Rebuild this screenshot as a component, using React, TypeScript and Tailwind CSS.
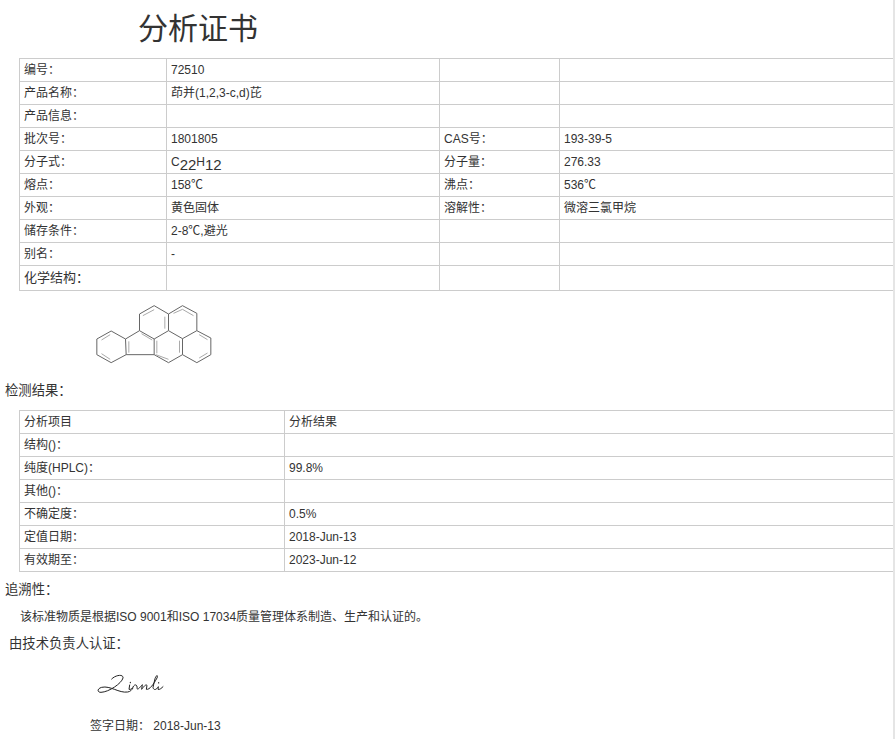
import React from 'react';

const sub = 'bottom-[-4px] text-[15px] leading-none';

const infoRows: [React.ReactNode, React.ReactNode, string, string][] = [
  ['编号：', '72510', '', ''],
  ['产品名称：', '茚并(1,2,3-c,d)芘', '', ''],
  ['产品信息：', '', '', ''],
  ['批次号：', '1801805', 'CAS号：', '193-39-5'],
  ['分子式：', <>C<sub className={sub}>22</sub>H<sub className={sub}>12</sub></>, '分子量：', '276.33'],
  ['熔点：', '158℃', '沸点：', '536℃'],
  ['外观：', '黄色固体', '溶解性：', '微溶三氯甲烷'],
  ['储存条件：', '2-8℃,避光', '', ''],
  ['别名：', '-', '', ''],
];

const resultRows = [
  ['分析项目', '分析结果'],
  ['结构()：', ''],
  ['纯度(HPLC)：', '99.8%'],
  ['其他()：', ''],
  ['不确定度：', '0.5%'],
  ['定值日期：', '2018-Jun-13'],
  ['有效期至：', '2023-Jun-12'],
];

const cell = 'h-[23px] border border-[#ccc] px-[4px] py-0 align-middle';

function Molecule() {
  return (
    <svg viewBox="285 130 350 180" className="ml-[95px] block h-[60px] w-[117px]" fill="none" stroke="#666" strokeWidth="3">
      <path d="M590 210L632 232V282L590 306L547 282V234L590 210V158L547 135L505 160V210L547 234M505 160L462 135L418 160V210L462 235L505 210M462 235V282L505 306L547 282M462 282L378 282L333 306L290 282V235L333 211L376 235L378 282M376 235L418 210" />
      <path stroke="#aaa" d="M597 222L622 237M622 277L597 292M494 168V204M538 240V276M470 240V278M467 282L505 296M386 242V276M330 222L304 238M304 279L330 296M428 165L462 147M520 158L547 146L580 165M424 219L456 238" />
    </svg>
  );
}

function Signature() {
  return (
    <svg viewBox="0 0 270 120" className="ml-[85px] block h-[40px] w-[90px]" fill="none" stroke="#222" strokeWidth="3" strokeLinecap="round">
      <path d="M80 45C92 32 116 30 114 42C110 58 72 84 48 85C36 85 36 74 50 70C76 64 102 88 128 84C136 83 140 78 144 72" />
      <path d="M134 63L132 76C138 78 142 72 146 66C150 60 158 62 156 74C160 78 166 68 172 62L170 76C176 68 182 60 186 64L184 76C194 78 206 60 216 42C220 32 214 32 210 44L204 70C206 80 214 78 220 68L219 76C224 78 230 72 234 68" />
      <path strokeWidth="3.5" d="M136 55L136 56M221 56L221 57" />
    </svg>
  );
}

export default function App() {
  return (
    <div className="h-[739px] overflow-hidden border-r-2 border-[#e5e5e5] bg-white font-['Liberation_Sans','Noto_Sans_CJK_SC',sans-serif] text-[12px] leading-[17px] text-[#333]">
      <h1 className="h-[58px] pl-[138px] pt-[8px] text-[30px] font-normal leading-[42px]">分析证书</h1>

      <table className="ml-[19px] w-[875px] table-fixed border-collapse">
        <colgroup>
          <col className="w-[147px]" />
          <col className="w-[273px]" />
          <col className="w-[120px]" />
          <col />
        </colgroup>
        <tbody>
          {infoRows.map((row, i) => (
            <tr key={i}>
              {row.map((c, j) => (
                <td key={j} className={cell}>{c}</td>
              ))}
            </tr>
          ))}
          <tr>
            <td className={`${cell} h-[25px] pb-[2px] text-[13px]`}>化学结构：</td>
            <td className={cell} />
            <td className={cell} />
            <td className={cell} />
          </tr>
        </tbody>
      </table>

      <div className="pt-[13px]">
        <Molecule />
      </div>

      <div className="mt-[17px] h-[20px] pl-[5px] text-[13.33px] leading-[20px]">检测结果：</div>

      <table className="ml-[19px] mt-[9px] w-[875px] table-fixed border-collapse">
        <colgroup>
          <col className="w-[265px]" />
          <col />
        </colgroup>
        <tbody>
          {resultRows.map(row => (
            <tr key={row[0]}>
              <td className={cell}>{row[0]}</td>
              <td className={cell}>{row[1]}</td>
            </tr>
          ))}
        </tbody>
      </table>

      <div className="mt-[8px] h-[20px] pl-[5px] text-[13.33px] leading-[20px]">追溯性：</div>
      <p className="mt-[9px] pl-[20px]">该标准物质是根据ISO 9001和ISO 17034质量管理体系制造、生产和认证的。</p>
      <div className="mt-[8px] h-[20px] pl-[9px] text-[13.33px] leading-[20px]">由技术负责人认证：</div>
      <div className="pt-[10px]">
        <Signature />
      </div>
      <p className="mt-[14px] pl-[90px]">签字日期： 2018-Jun-13</p>
    </div>
  );
}
